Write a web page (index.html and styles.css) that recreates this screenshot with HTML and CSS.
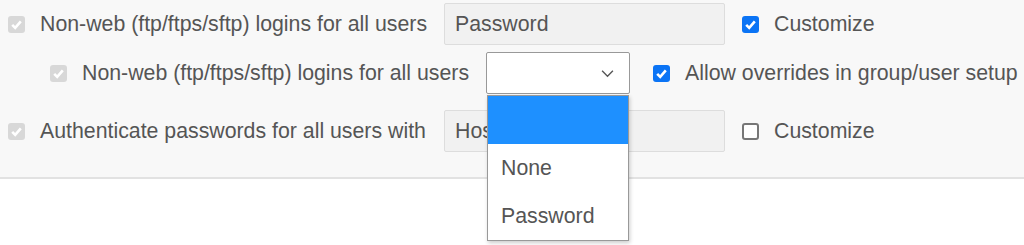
FILE: index.html
```html
<!DOCTYPE html>
<html lang="en">

<head>
  <meta charset="UTF-8">
  <meta name="viewport" content="width=device-width, initial-scale=1.0">
  <title>Login settings</title>
  <link rel="stylesheet" href="styles.css">
</head>

<body>
  <section class="panel">
    <!-- Non-web logins -->
    <div class="row">
      <span class="check disabled">
        <svg viewBox="0 0 17 17"><path d="M4.2 8.8l3 3 5.6-6.4" /></svg>
      </span>
      <span class="label">Non-web (ftp/ftps/sftp) logins for all users</span>
      <div class="field readonly">Password</div>
      <span class="check on">
        <svg viewBox="0 0 17 17"><path d="M4.2 8.8l3 3 5.6-6.4" /></svg>
      </span>
      <span class="text">Customize</span>
    </div>

    <div class="row sub">
      <span class="check disabled">
        <svg viewBox="0 0 17 17"><path d="M4.2 8.8l3 3 5.6-6.4" /></svg>
      </span>
      <span class="label">Non-web (ftp/ftps/sftp) logins for all users</span>
      <div class="select-wrap">
        <div class="select">
          <svg class="chev" viewBox="0 0 16 10"><path d="M2 2l6 6 6-6" /></svg>
        </div>
        <ul class="dropdown">
          <li class="active"></li>
          <li>None</li>
          <li>Password</li>
        </ul>
      </div>
      <span class="check on">
        <svg viewBox="0 0 17 17"><path d="M4.2 8.8l3 3 5.6-6.4" /></svg>
      </span>
      <span class="text">Allow overrides in group/user setup</span>
    </div>

    <!-- Authentication -->
    <div class="row last">
      <span class="check disabled">
        <svg viewBox="0 0 17 17"><path d="M4.2 8.8l3 3 5.6-6.4" /></svg>
      </span>
      <span class="label">Authenticate passwords for all users with</span>
      <div class="field readonly">Host</div>
      <span class="check off"></span>
      <span class="text">Customize</span>
    </div>
  </section>
</body>

</html>
```

FILE: styles.css
```css
* {
  box-sizing: border-box;
  margin: 0;
  padding: 0;
  font-family: "Liberation Sans", Arial, sans-serif;
}

html, body {
  min-height: 100vh;
}

body {
  background-color: #fff;
  color: #555;
  font-size: 21.3px;
}

.panel {
  background-color: #f8f8f8;
  border-bottom: 2px solid #e2e2e2;
  padding-top: 3px;
  height: 179px;
}

.row {
  display: flex;
  align-items: center;
  height: 42px;
  padding-left: 8px;
}

.row.sub {
  margin-top: 7px;
  padding-left: 50px;
}

.row.last {
  margin-top: 16px;
}

.check {
  width: 17px;
  height: 17px;
  border-radius: 3px;
  flex-shrink: 0;
}

.check svg {
  display: block;
  width: 17px;
  height: 17px;
  fill: none;
  stroke: #fff;
  stroke-width: 2.6;
}

.check.disabled {
  background-color: #d8d8d8;
}

.check.on {
  background-color: #0b74f5;
}

.check.off {
  background-color: #fff;
  border: 2px solid #777;
}

.label {
  width: 404px;
  margin-left: 15px;
  white-space: nowrap;
}

.field {
  width: 281px;
  height: 42px;
  padding: 0 10px;
  line-height: 40px;
  border: 1px solid #ddd;
  border-radius: 2px;
  margin-right: 17px;
}

.field.readonly {
  background-color: #f1f1f1;
}

.text {
  margin-left: 15px;
  white-space: nowrap;
}

.select-wrap {
  position: relative;
  margin-right: 23px;
}

.select {
  width: 144px;
  height: 42px;
  background: #fff;
  border: 1px solid #999;
  border-radius: 2px;
  display: flex;
  align-items: center;
  justify-content: flex-end;
  padding-right: 14px;
}

.chev {
  width: 15px;
  height: 9px;
  fill: none;
  stroke: #555;
  stroke-width: 1.5;
}

.dropdown {
  position: absolute;
  left: 1px;
  top: 43px;
  width: 142px;
  list-style: none;
  background: #fff;
  border: 1px solid #999;
  box-shadow: 1px 2px 4px rgba(0, 0, 0, 0.2);
  z-index: 2;
}

.dropdown li {
  height: 48px;
  line-height: 48px;
  padding-left: 13px;
}

.dropdown li.active {
  background-color: #1e90ff;
}
```
